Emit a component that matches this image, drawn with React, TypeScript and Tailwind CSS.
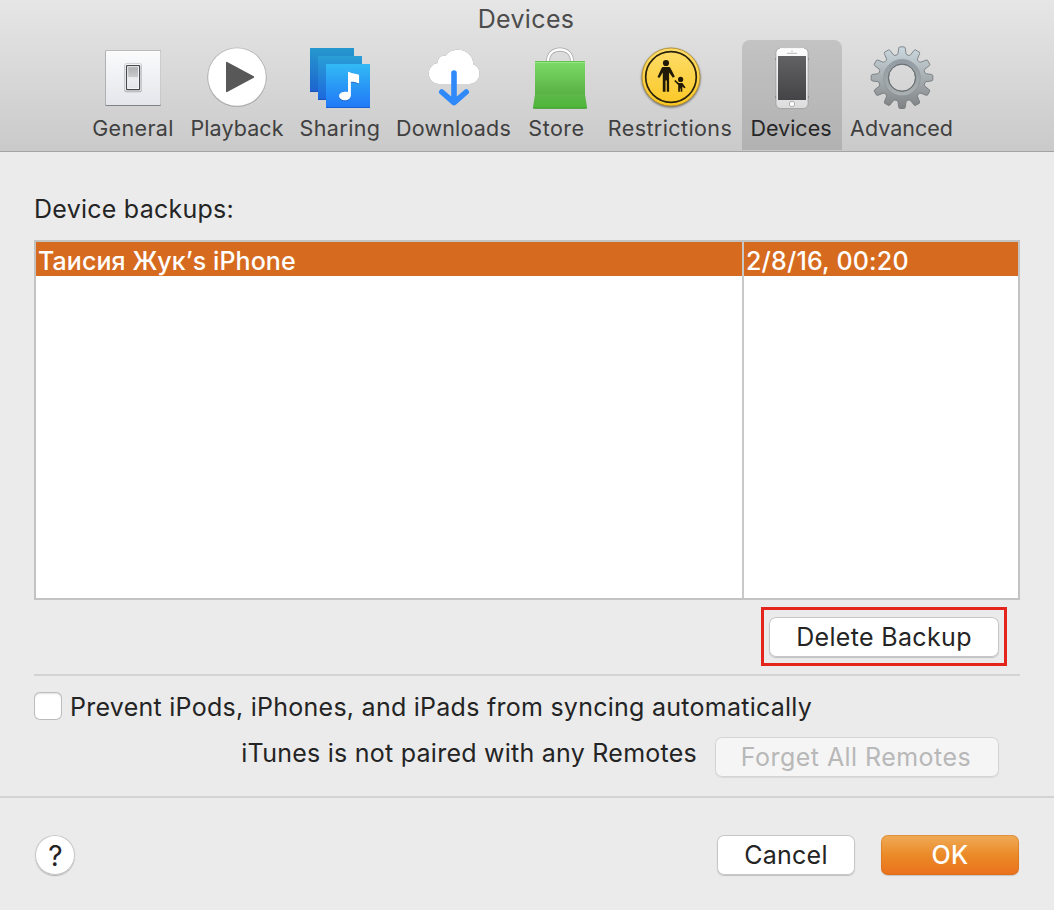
import React from 'react';

const GeneralIcon: React.FC = () => (
    <svg viewBox="0 0 64 64" className="h-16 w-16">
        <defs>
            <linearGradient id="plate" x1="0" y1="0" x2="0" y2="1">
                <stop offset="0" stopColor="#fbfbfc" />
                <stop offset="1" stopColor="#e3e6eb" />
            </linearGradient>
            <linearGradient id="rocker" x1="0" y1="0" x2="0" y2="1">
                <stop offset="0" stopColor="#a9abad" />
                <stop offset="0.48" stopColor="#c9cbcd" />
                <stop offset="0.5" stopColor="#eceef0" />
                <stop offset="1" stopColor="#e2e5e8" />
            </linearGradient>
        </defs>
        <rect x="4.3" y="4.5" width="55.7" height="55.5" rx="1.2" fill="#808285" />
        <rect x="4.3" y="4" width="55.7" height="55" rx="1.2" fill="#b9bbbd" />
        <rect x="5" y="5" width="54.3" height="54" rx="0.6" fill="url(#plate)" />
        <rect x="23.4" y="18" width="17.4" height="28.2" rx="2" fill="#a6a8ab" />
        <rect x="23.8" y="17.4" width="16.6" height="27.8" rx="1.8" fill="#f3f4f6" stroke="#c4c6c9" strokeWidth="0.8" />
        <rect x="25.6" y="19.6" width="13" height="24" rx="0.6" fill="url(#rocker)" stroke="#47484b" strokeWidth="1.2" />
        <rect x="26.7" y="20.7" width="10.8" height="21.8" fill="none" stroke="#f6f7f8" strokeWidth="0.9" />
    </svg>
);

const PlaybackIcon: React.FC = () => (
    <svg viewBox="0 0 64 64" className="h-16 w-16">
        <circle cx="32" cy="31.5" r="29.6" fill="#a3a3a3" />
        <circle cx="32" cy="31" r="29.6" fill="#b9b9b9" />
        <circle cx="32" cy="31" r="28.8" fill="#fff" />
        <path d="M21.8 16.6 48.4 31 21.8 45.4z" fill="#585858" stroke="#585858" strokeWidth="1.6" strokeLinejoin="round" />
    </svg>
);

const SharingIcon: React.FC = () => (
    <svg viewBox="0 0 64 64" className="h-16 w-16">
        <defs>
            <linearGradient id="back" x1="0" y1="0" x2="0" y2="1">
                <stop offset="0" stopColor="#2698ce" />
                <stop offset="1" stopColor="#1d63cf" />
            </linearGradient>
            <linearGradient id="mid" x1="0" y1="0" x2="0" y2="1">
                <stop offset="0" stopColor="#2a9ed6" />
                <stop offset="1" stopColor="#1d68dc" />
            </linearGradient>
            <linearGradient id="front" x1="0" y1="0" x2="0" y2="1">
                <stop offset="0" stopColor="#32baf5" />
                <stop offset="1" stopColor="#2177f7" />
            </linearGradient>
        </defs>
        <rect x="2" y="2" width="44" height="44" fill="url(#back)" />
        <rect x="2" y="45" width="44" height="1" fill="#1853b5" />
        <rect x="10" y="10" width="44" height="44" fill="url(#mid)" />
        <rect x="10" y="53" width="44" height="1" fill="#1853b5" />
        <rect x="18" y="18" width="44" height="44" fill="url(#front)" />
        <rect x="18" y="61" width="44" height="1" fill="#1a5fd0" />
        <path
            d="M40 26.6c0-.7.6-1 1.2-.7 2.8 1.600 6.500 1.500 9.200 2.600.5.2.7.500.7 1v7.200c0 .6-.4.8-.9.5-2.300-1.300-4.700-1.500-7.300-1.500V49.200c0 3.100-2.700 5.100-6 5.100-3.100 0-5.800-1.500-5.800-4.200 0-3.300 4-4.800 8.900-4.200z"
            fill="#fff"
            className="drop-shadow-[0.6px_1px_0.6px_rgba(20,70,160,0.45)]"
        />
    </svg>
);

const DownloadsIcon: React.FC = () => (
    <svg viewBox="0 0 64 64" className="h-16 w-16">
        <path
            d="M17.4 38C11.2 38 6.7 33.2 6.7 27.5c0-5.7 4.3-10 9-10.6C15.8 12.2 19.4 9 23.5 9.7 26 6 30.7 3.7 36.2 3.7 44.5 3.7 51.2 10 51.3 18.2 55.3 19.6 57.5 23.5 57.5 27.5 57.5 33.4 53 38 47 38z"
            fill="#fff"
            className="drop-shadow-[0_0.5px_0.6px_rgba(0,0,0,0.5)]"
        />
        <path d="M32 27v29M19.8 46 32 56.7 44.2 46" fill="none" stroke="#3089f8" strokeWidth="5.6" strokeLinecap="round" strokeLinejoin="round" />
    </svg>
);

const StoreIcon: React.FC = () => (
    <svg viewBox="0 0 64 64" className="h-16 w-16">
        <defs>
            <linearGradient id="bag" x1="0" y1="0" x2="0" y2="1">
                <stop offset="0" stopColor="#7edb68" />
                <stop offset="1" stopColor="#57b143" />
            </linearGradient>
            <linearGradient id="base" x1="0" y1="0" x2="0" y2="1">
                <stop offset="0" stopColor="#5cb948" />
                <stop offset="1" stopColor="#4fb53a" />
            </linearGradient>
        </defs>
        <path d="M20 15.5C20 8 25 3.500 32 3.500S44 8 44 15.500" fill="none" stroke="#a6a6a6" strokeWidth="3.8" />
        <path d="M20 15.5C20 8 25 3.500 32 3.500S44 8 44 15.500" fill="none" stroke="#fdfdfd" strokeWidth="2.3" />
        <path d="M7 48.5h50l2 12.7q.1 1.300-1.200 1.300H6.2Q4.900 62.500 5 61.200z" fill="url(#base)" />
        <path d="M5 61.500q-.1 1.300 1.200 1.300h51.600q1.300 0 1.200-1.300z" fill="#459f33" />
        <rect x="7" y="15" width="50" height="34" fill="url(#bag)" />
        <rect x="7" y="15" width="50" height="0.9" fill="#62c04d" />
        <rect x="7" y="16" width="50" height="1" fill="#95e582" />
        <rect x="7" y="48.400" width="50" height="0.6" fill="#62bc4e" />
    </svg>
);

const RestrictionsIcon: React.FC = () => (
    <svg viewBox="0 0 64 64" className="h-16 w-16">
        <defs>
            <linearGradient id="sign" x1="0" y1="0" x2="0" y2="1">
                <stop offset="0" stopColor="#fedd6b" />
                <stop offset="1" stopColor="#fac724" />
            </linearGradient>
        </defs>
        <circle cx="32" cy="31" r="29" fill="url(#sign)" stroke="#b58f2c" strokeWidth="0.9" className="drop-shadow-[0_1px_1px_rgba(0,0,0,0.55)]" />
        <circle cx="32" cy="31" r="25.3" fill="none" stroke="#2a220b" strokeWidth="1.7" />
        <g fill="#211a06">
            <circle cx="27" cy="17" r="3.1" />
            <path d="M24.6 20.9h5c1 0 1.6.5 2 1.300l4.200 8.300-1.900 1.200-3.800-5.200v19.200h-2.300V34.600h-1.300v11.100h-2.700V26.500L20.400 32.100l-1.900-1.100 4-8.800c.4-.8 1.100-1.300 2.100-1.300z" />
            <circle cx="41.600" cy="33.400" r="2.6" />
            <path d="m36.400 33.900 3.200 3h3.800l3.200 4.500-1.300.9-2-1.900v5.300h-1.700v-3.200h-.7v3.200h-1.700v-6.600l-4-4.200z" />
        </g>
    </svg>
);

const PhoneIcon: React.FC = () => (
    <svg viewBox="0 0 64 64" className="h-16 w-16">
        <defs>
            <linearGradient id="shell" x1="0" y1="0" x2="0" y2="1">
                <stop offset="0" stopColor="#fefefe" />
                <stop offset="1" stopColor="#dcdcdc" />
            </linearGradient>
            <linearGradient id="screen" x1="0" y1="0" x2="0" y2="1">
                <stop offset="0" stopColor="#626264" />
                <stop offset="1" stopColor="#444446" />
            </linearGradient>
        </defs>
        <path d="M15.5 12v2.2M48.5 12v2.2M15.5 50v2.2M48.5 50v2.2" stroke="#777" strokeWidth="0.9" />
        <rect x="15.9" y="2" width="32.2" height="60.6" rx="4.8" fill="url(#shell)" stroke="#999" strokeWidth="0.8" />
        <path d="M20 2.300h24" stroke="#fff" strokeWidth="1" />
        <rect x="18" y="10" width="28" height="44" rx="0.4" fill="url(#screen)" />
        <rect x="27" y="6.800" width="10" height="1.2" rx="0.6" fill="#c4c4c4" />
        <circle cx="32" cy="5" r="0.9" fill="#d4d4d4" />
        <circle cx="32" cy="58" r="2.7" fill="#fff" stroke="#a6a6a6" strokeWidth="0.9" />
    </svg>
);

// Outline of a twelve-toothed wheel around (cx, cy)
const gearPath = (cx: number, cy: number) => {
    const corners: [number, number][] = [[22.9, -4.8], [24.2, -4], [29.8, -3.2], [30.8, -2.4], [30.8, 2.4], [29.8, 3.2], [24.2, 4], [22.9, 4.8]];
    const points: string[] = [];
    for (let i = 0; i < 12; i++) {
        const a = (i * Math.PI) / 6;
        corners.forEach(([r, t]) => {
            const x = cx + r * Math.cos(a) - t * Math.sin(a);
            const y = cy + r * Math.sin(a) + t * Math.cos(a);
            points.push(`${x.toFixed(2)} ${y.toFixed(2)}`);
        });
    }
    return `M${points.join('L')}z`;
};

const AdvancedIcon: React.FC = () => (
    <svg viewBox="0 0 64 64" className="h-16 w-16">
        <defs>
            <linearGradient id="steel" x1="0" y1="0" x2="0" y2="1">
                <stop offset="0" stopColor="#cbd9e0" />
                <stop offset="0.5" stopColor="#a7aeb2" />
                <stop offset="1" stopColor="#7f8283" />
            </linearGradient>
            <linearGradient id="ring" x1="0" y1="0" x2="0" y2="1">
                <stop offset="0" stopColor="#929ca2" />
                <stop offset="1" stopColor="#a9aeb0" />
            </linearGradient>
        </defs>
        <path
            d={`${gearPath(32, 31.7)}M45.4 31.7a13.4 13.4 0 1 0-26.8 0 13.4 13.4 0 1 0 26.8 0z`}
            fill="url(#steel)"
            fillRule="evenodd"
            stroke="#6c7276"
            strokeWidth="0.8"
            strokeLinejoin="round"
        />
        <circle cx="32" cy="31.7" r="16" fill="none" stroke="url(#ring)" strokeWidth="4" />
        <circle cx="32" cy="31.7" r="18.3" fill="none" stroke="#8a9298" strokeWidth="0.7" />
        <circle cx="32" cy="31.7" r="13.7" fill="none" stroke="#686d70" strokeWidth="1" />
    </svg>
);

interface Tab {
    label: string;
    icon: React.ReactNode;
    width: string;
    labelClass: string;
}

const tabs: Tab[] = [
    { label: 'General', icon: <GeneralIcon />, width: 'w-[98px]', labelClass: 'tracking-[0.35px]' },
    { label: 'Playback', icon: <PlaybackIcon />, width: 'w-[110px]', labelClass: 'tracking-[0.1px]' },
    { label: 'Sharing', icon: <SharingIcon />, width: 'w-24', labelClass: 'tracking-[0.4px]' },
    { label: 'Downloads', icon: <DownloadsIcon />, width: 'w-[132px]', labelClass: 'tracking-[0.2px] pr-px' },
    { label: 'Store', icon: <StoreIcon />, width: 'w-20', labelClass: 'tracking-[0.5px] pr-[7px]' },
    { label: 'Restrictions', icon: <RestrictionsIcon />, width: 'w-[142px]', labelClass: 'tracking-[0.4px] pr-[2px]' },
    { label: 'Devices', icon: <PhoneIcon />, width: 'w-[100px]', labelClass: 'tracking-normal pr-[2px]' },
    { label: 'Advanced', icon: <AdvancedIcon />, width: 'w-[120px]', labelClass: 'tracking-normal pr-px' },
];

interface PushButtonProps {
    className: string;
    children: React.ReactNode;
}

const PushButton: React.FC<PushButtonProps> = ({ className, children }) => (
    <button className={`flex h-10 items-center justify-center rounded-[7px] leading-8 ${className}`}>{children}</button>
);

const plain = 'bg-white shadow-[inset_0_0_0_1px_#c6c6c6,0_1px_1px_rgba(0,0,0,0.18)]';

const App: React.FC = () => {
    const selected = 'Devices';

    return (
        <div className="flex h-[910px] w-[1054px] flex-col bg-[#ebebeb] font-[Inter,sans-serif] text-[25px] tracking-[0.25px] text-[#242424]">
            <header className="h-[152px] border-b border-[#a3a3a3] bg-linear-to-b from-[#e6e6e6] to-[#cacaca]">
                <h1 className="h-10 pt-[3px] pr-[2px] text-center leading-8 tracking-[0.35px] text-[#4c4c4c]">Devices</h1>
                <nav className="flex pl-[84px]">
                    {tabs.map(({ label, icon, width, labelClass }) => (
                        <button
                            key={label}
                            className={`flex h-[110px] flex-col items-center rounded-t-lg pt-1.5 ${width} ${label === selected ? 'bg-black/12 text-[#262626]' : 'text-[#404040]'}`}
                        >
                            {icon}
                            <span className={`mt-1 text-[21.5px] leading-7 whitespace-nowrap ${labelClass}`}>{label}</span>
                        </button>
                    ))}
                </nav>
            </header>

            <main className="flex flex-col px-[34px] pt-[41px]">
                <h2 className="h-[47px] leading-8">Device backups:</h2>

                <div className="flex h-[360px] border-2 border-[#c3c3c3] bg-white font-medium text-white">
                    <div className="w-[708px] border-r-2 border-[#c8c8c8]">
                        <div className="h-[34px] bg-[#d66b20] pl-[2px] leading-[38px] tracking-[0.07px]">Таисия Жук’s iPhone</div>
                    </div>
                    <div className="flex-1">
                        <div className="h-[34px] bg-[#d66b20] pl-[2px] leading-[38px] tracking-[0.19px]">2/8/16, 00:20</div>
                    </div>
                </div>

                <div className="mt-[7px] mr-[13px] self-end border-[3px] border-[#e3251b] px-[5px] pt-[7px] pb-1.5">
                    <PushButton className={`w-[230px] tracking-[0.33px] ${plain}`}>Delete Backup</PushButton>
                </div>

                <hr className="mt-2 border-t-2 border-[#d3d3d3]" />

                <label className="mt-[15px] flex h-8 gap-2 leading-8 tracking-[0.26px]">
                    <span className="mt-px h-7 w-7 rounded-md bg-white shadow-[inset_0_0_0_1px_#bcbcbc,inset_0_2px_2px_rgba(0,0,0,0.12)]" />
                    Prevent iPods, iPhones, and iPads from syncing automatically
                </label>

                <div className="mt-[14px] mr-[21px] flex justify-end gap-[18px]">
                    <span className="leading-8">iTunes is not paired with any Remotes</span>
                    <PushButton className="w-[284px] bg-[#f5f5f5] pr-[2px] tracking-[0.45px] text-[#b8b8b8] shadow-[inset_0_0_0_1px_#d5d5d5,0_1px_1px_rgba(0,0,0,0.08)]">
                        Forget All Remotes
                    </PushButton>
                </div>
            </main>

            <footer className="mt-[19px] flex border-t-2 border-[#d3d3d3] px-[35px] pt-[37px]">
                <button className="flex h-10 w-10 items-center justify-center rounded-full bg-white pt-px pl-px text-[28px] leading-8 font-normal shadow-[inset_0_0_0_1px_#c6c6c6,0_1px_1px_rgba(0,0,0,0.25)]">
                    ?
                </button>
                <PushButton className={`ml-auto w-[138px] ${plain}`}>Cancel</PushButton>
                <PushButton className="ml-[26px] w-[138px] bg-linear-to-b from-[#efab56] via-[#eb8a27] to-[#ea711d] font-medium text-white shadow-[inset_0_0_0_1px_rgba(200,100,20,0.35),0_1px_1px_rgba(0,0,0,0.15)]">
                    OK
                </PushButton>
            </footer>
        </div>
    );
};

export default App;
